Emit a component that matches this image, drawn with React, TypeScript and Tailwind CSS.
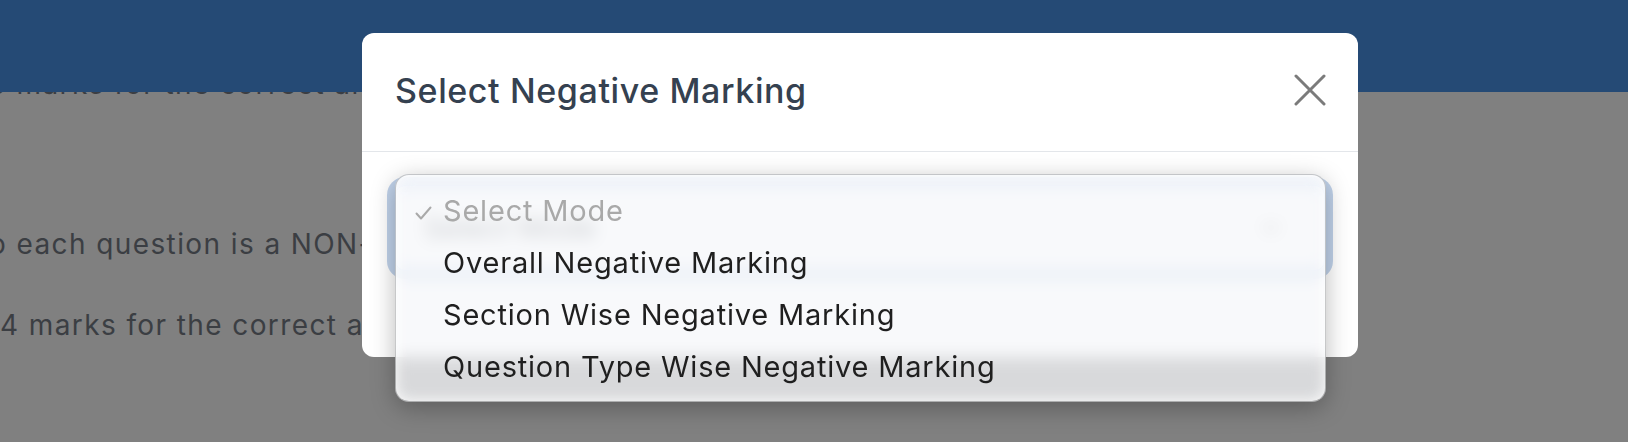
const options = [
  "Overall Negative Marking",
  "Section Wise Negative Marking",
  "Question Type Wise Negative Marking",
];

function CloseIcon() {
  return (
    <svg width="32" height="32" viewBox="0 0 32 32" fill="none">
      <path d="M2 2L30 30M30 2L2 30" stroke="#7b7b7b" strokeWidth="3" strokeLinecap="round" />
    </svg>
  );
}

function Check() {
  return (
    <svg width="17" height="14" viewBox="0 0 17 14" fill="none">
      <path d="M1.5 7.5L6 12.5L15.5 1.5" stroke="#a9a9a9" strokeWidth="2" strokeLinecap="round" strokeLinejoin="round" />
    </svg>
  );
}

export default function App() {
  return (
    <div className="relative h-[442px] w-[1628px] overflow-hidden bg-[#808080] font-['Inter',sans-serif]">
      <header className="relative z-10 h-[92px] bg-[#254a75]" />

      {/* page behind the backdrop */}
      <div className="-mt-[28px] whitespace-nowrap text-[28px] leading-[40px] tracking-[1.4px] text-[#3b3e43]">
        <p className="-ml-[11px]">o marks for the correct answer</p>
        <p className="-ml-[11px] mt-[120px]">o each question is a NON-negative</p>
        <p className="mt-[41px]">4 marks for the correct answer</p>
      </div>

      {/* modal */}
      <div className="absolute left-[362px] top-[33px] z-20 h-[324px] w-[996px] rounded-[12px] bg-white">
        <div className="flex h-[119px] items-center justify-between border-b border-[#e3e6ea] pb-[4px] pl-[33px] pr-[32px]">
          <h2 className="text-[34px] font-medium tracking-[0.6px] text-[#354150]">Select Negative Marking</h2>
          <CloseIcon />
        </div>
        <div className="px-[33px] pt-[33px]">
          <div className="flex h-[86px] items-center justify-between rounded-[10px] border border-[#86b7fe] pl-[28px] pr-[45px] ring-[8px] ring-[#c0d2ea]">
            <span className="text-[29px] text-[#555b63]">Select Mode</span>
            <svg width="16" height="10" viewBox="0 0 16 10" fill="none">
              <path d="M1.5 1.5L8 8L14.5 1.5" stroke="#555" strokeWidth="2" strokeLinecap="round" strokeLinejoin="round" />
            </svg>
          </div>
        </div>
      </div>

      {/* native select popup */}
      <div className="absolute left-[395px] top-[174px] z-30 h-[228px] w-[931px] rounded-[14px] border border-black/20 bg-[#f5f7fa]/75 py-[10px] text-[29px] tracking-[0.8px] shadow-[0_6px_24px_rgba(0,0,0,0.28),inset_0_0_14px_rgba(255,255,255,0.95)] backdrop-blur-[8px]">
        <div className="flex h-[52px] items-center pl-[19px] text-[#a9a9a9]">
          <span className="mr-[11px] mt-[4px] flex w-[17px]">
            <Check />
          </span>
          Select Mode
        </div>
        {options.map((o) => (
          <div key={o} className="flex h-[52px] items-center pl-[47px] text-[#1f1f1f]">
            {o}
          </div>
        ))}
      </div>
    </div>
  );
}
